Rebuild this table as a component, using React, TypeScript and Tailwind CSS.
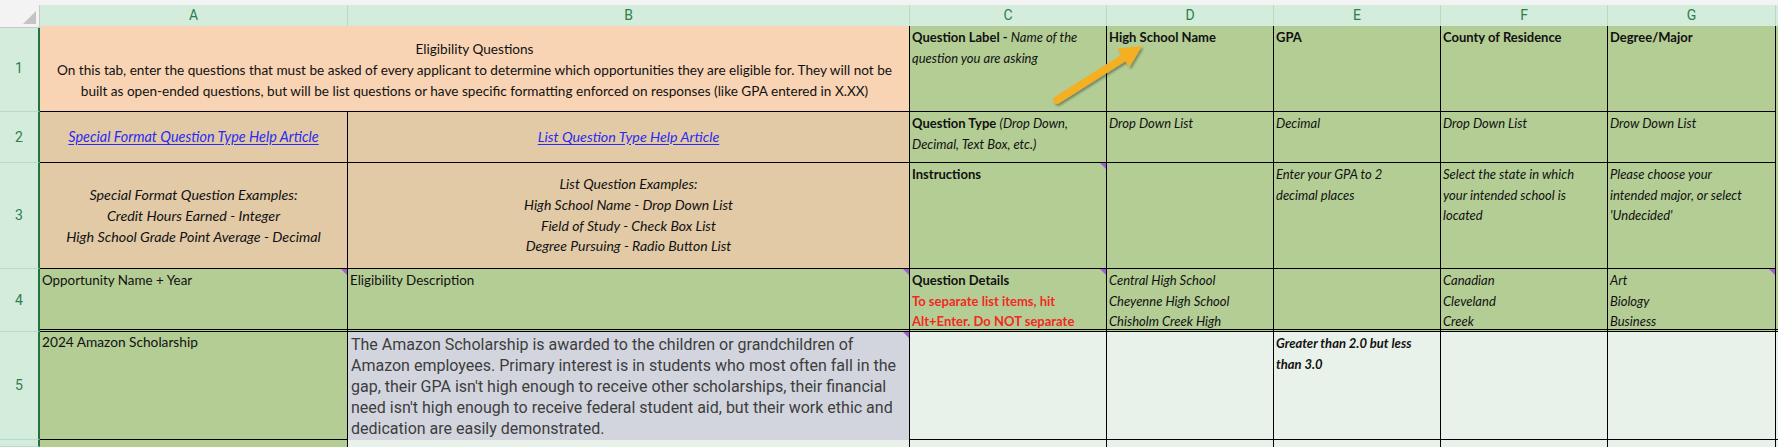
import React from 'react';

// Spreadsheet screenshot: eligibility questions tab, columns A-G selected
const Cell: React.FC<{ className?: string; b?: string; note?: boolean; children?: React.ReactNode }> = ({
  className = '',
  b = 'border-r border-b border-black',
  note,
  children,
}) => (
  <div className={`relative overflow-hidden ${b} ${className}`}>
    {children}
    {note && (
      <span className="absolute top-0 right-0 border-t-[6px] border-l-[6px] border-t-[#a35fd1] border-l-transparent" />
    )}
  </div>
);

const RowHead: React.FC<{ n?: string }> = ({ n }) => (
  <div className="flex items-center justify-center bg-[#d3ecdc] border-r-2 border-r-[#217346] border-b border-b-[#b9dac4] font-['Roboto',sans-serif] text-[14px] text-[#2e7d4f]">
    {n}
  </div>
);

const ColHead: React.FC<{ l: string }> = ({ l }) => (
  <div className="flex items-center justify-center bg-[#d3ecdc] border-r border-r-[#b9dac4] border-b-2 border-b-[#217346] font-['Roboto',sans-serif] text-[14px] text-[#2e7d4f]">
    {l}
  </div>
);

const green = 'bg-[#b3cd95]';
const top = 'px-[2px] pt-[1px]';
const dbl = 'border-r border-b-[3px] border-black border-double';

export default function App() {
  return (
    <div className="relative w-[1778px] h-[447px] overflow-hidden bg-white font-['Lato','Liberation_Sans',sans-serif] text-[13px] leading-[20.6px] text-[#111]">
      <div className="h-[5px] bg-[#f3f3f3]" />

      {/* column headers */}
      <div className="grid h-[21px] grid-cols-[40px_308px_562px_197px_167px_167px_167px_168px_2px]">
        <div className="relative bg-[#f3f3f3] border-r border-r-[#c9c9c9] border-b border-b-[#c9c9c9]">
          <svg className="absolute right-[3px] bottom-[3px]" width="13" height="13" viewBox="0 0 13 13">
            <polygon points="13,0 13,13 0,13" fill="#c4c4c4" />
          </svg>
        </div>
        {['A', 'B', 'C', 'D', 'E', 'F', 'G'].map((l) => (
          <ColHead key={l} l={l} />
        ))}
        <div className="bg-[#d3ecdc] border-b-2 border-b-[#217346]" />
      </div>

      {/* sheet body */}
      <div className="grid grid-cols-[40px_308px_562px_197px_167px_167px_167px_168px_2px] grid-rows-[86px_51px_106px_63px_108px_7px]">
        {/* row 1 */}
        <RowHead n="1" />
        <Cell className="col-span-2 flex flex-col items-center justify-center bg-[#f8d4b4] pt-[3px] text-center text-[13.6px] leading-[21px] whitespace-nowrap">
          <div>Eligibility Questions</div>
          <div>
            On this tab, enter the questions that must be asked of every applicant to determine which opportunities they
            are eligible for. They will not be
          </div>
          <div>
            built as open-ended questions, but will be list questions or have specific formatting enforced on responses
            (like GPA entered in X.XX)
          </div>
        </Cell>
        <Cell className={`${green} ${top} leading-[21px]`}>
          <div>
            <b>Question Label - </b>
            <i>Name of the</i>
          </div>
          <div>
            <i>question you are asking</i>
          </div>
        </Cell>
        <Cell className={`${green} ${top} font-bold`}>High School Name</Cell>
        <Cell className={`${green} ${top} font-bold`}>GPA</Cell>
        <Cell className={`${green} ${top} font-bold`}>County of Residence</Cell>
        <Cell className={`${green} ${top} font-bold`}>Degree/Major</Cell>
        <div className={green} />

        {/* row 2 */}
        <RowHead n="2" />
        <Cell className="flex items-center justify-center bg-[#e2caa7] text-[14.4px]">
          <span className="italic text-[#2a2af0] underline underline-offset-2">Special Format Question Type Help Article</span>
        </Cell>
        <Cell className="flex items-center justify-center bg-[#e2caa7] text-[14.3px]">
          <span className="italic text-[#2a2af0] underline underline-offset-2">List Question Type Help Article</span>
        </Cell>
        <Cell className={`${green} ${top} leading-[21px]`}>
          <div>
            <b>Question Type</b> <i>(Drop Down,</i>
          </div>
          <div>
            <i>Decimal, Text Box, etc.)</i>
          </div>
        </Cell>
        <Cell className={`${green} ${top} italic`}>Drop Down List</Cell>
        <Cell className={`${green} ${top} italic`}>Decimal</Cell>
        <Cell className={`${green} ${top} italic`}>Drop Down List</Cell>
        <Cell className={`${green} ${top} italic`}>Drow Down List</Cell>
        <div className={green} />

        {/* row 3 */}
        <RowHead n="3" />
        <Cell className="flex flex-col items-center justify-center bg-[#e2caa7] text-center text-[14.3px] leading-[21px] italic whitespace-nowrap">
          <div>Special Format Question Examples:</div>
          <div>Credit Hours Earned - Integer</div>
          <div>High School Grade Point Average - Decimal</div>
        </Cell>
        <Cell className="flex flex-col items-center justify-center bg-[#e2caa7] text-center text-[14px] leading-[20.8px] italic whitespace-nowrap">
          <div>List Question Examples:</div>
          <div>High School Name - Drop Down List</div>
          <div>Field of Study - Check Box List</div>
          <div>Degree Pursuing - Radio Button List</div>
        </Cell>
        <Cell className={`${green} ${top} font-bold`} note>
          Instructions
        </Cell>
        <Cell className={green} />
        <Cell className={`${green} ${top} italic`}>
          <div>Enter your GPA to 2</div>
          <div>decimal places</div>
        </Cell>
        <Cell className={`${green} ${top} italic`}>
          <div>Select the state in which</div>
          <div>your intended school is</div>
          <div>located</div>
        </Cell>
        <Cell className={`${green} ${top} italic`}>
          <div>Please choose your</div>
          <div>intended major, or select</div>
          <div>'Undecided'</div>
        </Cell>
        <div className={green} />

        {/* row 4 */}
        <RowHead n="4" />
        <Cell className={`${green} ${top} text-[13.4px]`} b={dbl} note>
          Opportunity Name + Year
        </Cell>
        <Cell className={`${green} ${top} text-[13.4px]`} b={dbl} note>
          Eligibility Description
        </Cell>
        <Cell className={`${green} ${top}`} b={dbl} note>
          <div className="font-bold">Question Details</div>
          <div className="font-bold text-[#f2291f]">To separate list items, hit</div>
          <div className="font-bold text-[#f2291f]">Alt+Enter. Do NOT separate</div>
        </Cell>
        <Cell className={`${green} ${top} italic`} b={dbl}>
          <div>Central High School</div>
          <div>Cheyenne High School</div>
          <div>Chisholm Creek High</div>
        </Cell>
        <Cell className={green} b={dbl} />
        <Cell className={`${green} ${top} italic`} b={dbl}>
          <div>Canadian</div>
          <div>Cleveland</div>
          <div>Creek</div>
        </Cell>
        <Cell className={`${green} ${top} italic`} b={dbl} note>
          <div>Art</div>
          <div>Biology</div>
          <div>Business</div>
        </Cell>
        <div className={`${green} border-b-[3px] border-black border-double`} />

        {/* row 5 */}
        <RowHead n="5" />
        <Cell className={`${green} px-[2px] text-[13.7px]`}>2024 Amazon Scholarship</Cell>
        <Cell
          className="bg-[#d2d5de] pl-[3px] pr-[2px] pt-[2px] font-['Roboto',sans-serif] text-[16px] leading-[21px] text-[#3d3d3d] whitespace-nowrap"
          b="border-r border-black"
          note
        >
          <div>The Amazon Scholarship is awarded to the children or grandchildren of</div>
          <div>Amazon employees. Primary interest is in students who most often fall in the</div>
          <div>gap, their GPA isn't high enough to receive other scholarships, their financial</div>
          <div>need isn't high enough to receive federal student aid, but their work ethic and</div>
          <div>dedication are easily demonstrated.</div>
        </Cell>
        <Cell className="bg-[#e8f1ea]" />
        <Cell className="bg-[#e8f1ea]" />
        <Cell className="bg-[#e8f1ea] px-[2px] pt-[1px] font-bold italic">
          <div>Greater than 2.0 but less</div>
          <div>than 3.0</div>
        </Cell>
        <Cell className="bg-[#e8f1ea]" />
        <Cell className="bg-[#e8f1ea]" />
        <div className="bg-[#e8f1ea] border-b border-black" />

        {/* row 6, cut off at the bottom edge */}
        <RowHead />
        <Cell className={green} b="border-r border-black" />
        <Cell className="bg-[#e8f1ea]" b="border-r border-black" />
        <Cell className="bg-[#e8f1ea]" b="border-r border-black" />
        <Cell className="bg-[#e8f1ea]" b="border-r border-black" />
        <Cell className="bg-[#e8f1ea]" b="border-r border-black" />
        <Cell className="bg-[#e8f1ea]" b="border-r border-black" />
        <Cell className="bg-[#e8f1ea]" b="border-r border-black" />
        <div className="bg-[#e8f1ea]" />
      </div>

      {/* callout arrow pointing at the High School Name label */}
      <svg className="pointer-events-none absolute inset-0" width="1778" height="447">
        <defs>
          <filter id="sh" x="-20%" y="-20%" width="140%" height="140%">
            <feDropShadow dx="1.5" dy="2" stdDeviation="1.2" floodColor="#000" floodOpacity="0.35" />
          </filter>
        </defs>
        <g filter="url(#sh)">
          <line x1="1057" y1="100" x2="1125" y2="57" stroke="#f4b021" strokeWidth="7.5" strokeLinecap="round" />
          <polygon points="1142,46 1117.6,48.6 1129.4,67.2" fill="#f4b021" />
        </g>
      </svg>
    </div>
  );
}
